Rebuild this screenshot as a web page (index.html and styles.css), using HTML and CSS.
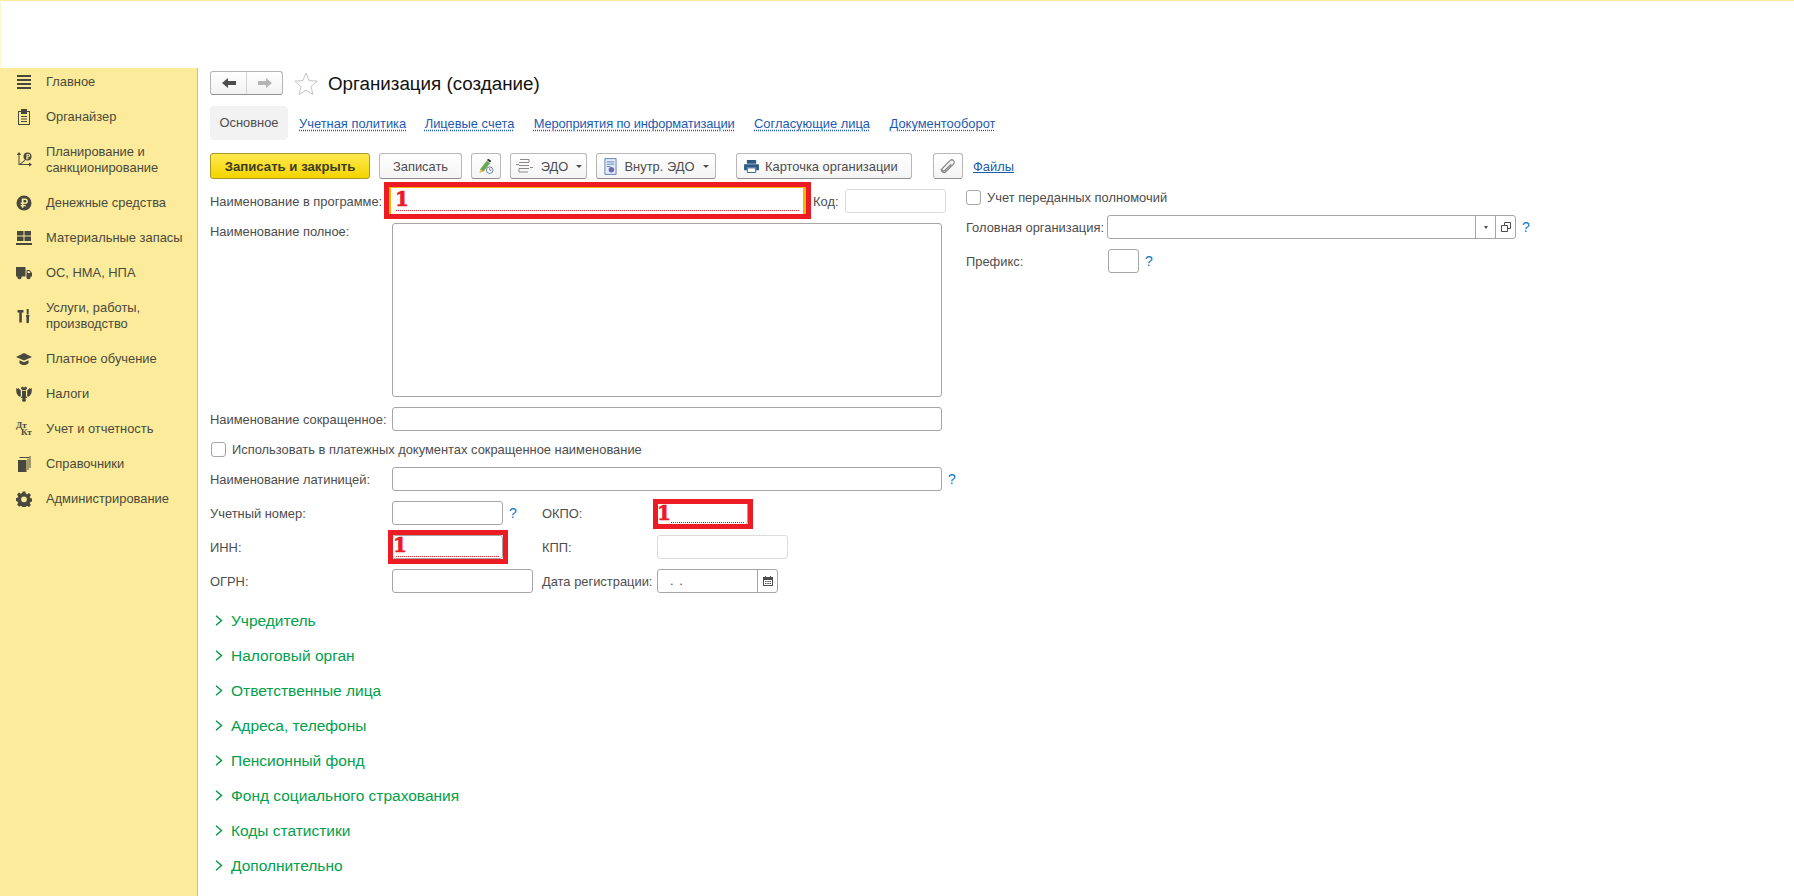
FILE: index.html
```html
<!DOCTYPE html>
<html lang="ru">
<head>
<meta charset="utf-8">
<title>Организация (создание)</title>
<link rel="stylesheet" href="styles.css">
</head>
<body>
<header class="topbar"></header>
<div class="shell">
  <nav class="sidebar">
    <a class="nav-item"><svg class="nav-icon" viewBox="0 0 16 16"><path d="M1 1h14v2H1zM1 5h14v2H1zM1 9h14v2H1zM1 13h14v2H1z"/></svg><span>Главное</span></a>
    <a class="nav-item"><svg class="nav-icon" viewBox="0 0 16 16"><path fill-rule="evenodd" d="M2 2h3V0h6v2h3v14H2zM3 3v12h10V3h-2v2H5V3z"/><path d="M5 7h6v1H5zM5 9.500h6v1H5zM5 12h6v1H5z"/></svg><span>Органайзер</span></a>
    <a class="nav-item"><svg class="nav-icon" viewBox="0 0 16 16"><path d="M2.500 2v11h12v-1h-11V2z"/><path d="M3 0 .8 3h4.400zM16 12.500l-3-2v4zM3.500 12l5-4 .6.700-5 4z"/><circle cx="11.500" cy="4.500" r="4"/><path fill="#fbeb9b" d="M10.500 2h2.200a1.500 1.500 0 0 1 0 3h-1.200v.8h1.500v.8h-1.500V7.500h-1V6.600H10v-.8h.5zM11.500 3v1.200h1.100a.6.600 0 0 0 0-1.200z"/></svg><span>Планирование и<br>санкционирование</span></a>
    <a class="nav-item"><svg class="nav-icon" viewBox="0 0 16 16"><circle cx="8" cy="8" r="7.500"/><path fill="#fbeb9b" d="M5.800 3.500h3.400a2.700 2.700 0 0 1 0 5.400H7.500v1h2.300v1.300H7.500v1.600H5.800v-1.600H4.700v-1.300h1.100v-1H4.700V7.600h1.100zM7.500 5v2.600h1.600a1.300 1.300 0 0 0 0-2.600z"/></svg><span>Денежные средства</span></a>
    <a class="nav-item"><svg class="nav-icon" viewBox="0 0 16 16"><path d="M1 1h6.500v4.500H1zM8.500 1H15v4.500H8.500zM1 6.500h6.500V11H1zM8.500 6.500H15V11H8.500zM0 13h16v2H0z"/></svg><span>Материальные запасы</span></a>
    <a class="nav-item"><svg class="nav-icon" viewBox="0 0 16 16"><path d="M0 2h9.500v9.500H0zM10.500 5h3l2.500 3v3.500h-5.500z"/><circle cx="3.500" cy="12" r="2.200"/><circle cx="12.500" cy="12" r="2.200"/><path fill="#fbeb9b" d="M11.500 6h1.600l1.500 2h-3.100z"/></svg><span>ОС, НМА, НПА</span></a>
    <a class="nav-item"><svg class="nav-icon" viewBox="0 0 16 16"><path d="M1.500 2H7.500V4.500H5.800V14.500H3.300V4.500H1.500zM10.700 1h2v5.500h-2zM10 7h3.400v1.200l-.4 1V14a1.300 1.300 0 0 1-2.600 0V9.200l-.4-1z"/></svg><span>Услуги, работы,<br>производство</span></a>
    <a class="nav-item"><svg class="nav-icon" viewBox="0 0 16 16"><path d="M8 2 0 6l8 3.500L16 6zM3.500 9.200v3c2 2.400 7 2.400 9 0v-3L8 11.200z"/></svg><span>Платное обучение</span></a>
    <a class="nav-item"><svg class="nav-icon" viewBox="0 0 16 16"><path d="M5.500 1 7 .5 8 2l1-1.500 1.500.5.500 1.500L9.800 4h-3.600L5 2.500zM0 2l1.500 1 1 -1 1 1.200 1.300 1.300V10L4 11l-2-1.500L.5 7zM16 2l-1.500 1-1-1-1 1.200-1.300 1.300V10l.8 1 2-1.500L15.500 7zM6 4.800h4V10l1 1.500-1.500 1 .5 2.500-2 1-2-1 .5-2.500-1.500-1L6 10z"/></svg><span>Налоги</span></a>
    <a class="nav-item"><span class="debit-icon"><b>Дт</b><b>Кт</b></span><span>Учет и отчетность</span></a>
    <a class="nav-item"><svg class="nav-icon" viewBox="0 0 16 16"><path d="M2 4h8.500v12H2zM11.500 2.500h1V14h-1zM3.500 1h9.500v1H3.500zM13.500 0h1v12h-1z"/></svg><span>Справочники</span></a>
    <a class="nav-item"><svg class="nav-icon" viewBox="0 0 16 16"><path fill-rule="evenodd" d="M6.600.5h2.800l.4 2.100 1.300.6 1.900-1.100 1.900 2-1.100 1.800.6 1.400 2 .4v2.700l-2 .5-.6 1.300 1.100 1.900-1.900 1.900-1.900-1.100-1.300.6-.4 2H6.600l-.4-2-1.300-.6L3 15.500l-1.900-1.900 1.100-1.900-.6-1.300-2-.5V7.200l2-.4.6-1.400L1.100 3.600l1.900-2 1.900 1.100 1.300-.6zM8 5.400a2.900 2.900 0 1 0 0 5.800 2.900 2.900 0 0 0 0-5.800z"/></svg><span>Администрирование</span></a>
  </nav>
  <main class="content">
    <div class="title-row">
      <div class="history">
        <button class="hist-btn"><svg viewBox="0 0 14 10" width="14" height="10"><path fill="#4d4d4d" d="M0 5l6-5v3h8v4H6v3z"/></svg></button>
        <button class="hist-btn"><svg viewBox="0 0 14 10" width="14" height="10"><path fill="#b5b5b5" d="M14 5L8 0v3H0v4h8v3z"/></svg></button>
      </div>
      <svg class="star" viewBox="0 0 24 23"><path fill="#fff" stroke="#c4c4c4" d="M12 1l3.100 7.600 8.200.6-6.300 5.300 2 8-7-4.300-7 4.300 2-8L.7 9.200l8.200-.6z"/></svg>
      <h1 class="title">Организация (создание)</h1>
    </div>
    <div class="tabs">
      <span class="tab-active">Основное</span>
      <a class="tab-link">Учетная политика</a>
      <a class="tab-link">Лицевые счета</a>
      <a class="tab-link tab-long">Мероприятия по информатизации</a>
      <a class="tab-link">Согласующие лица</a>
      <a class="tab-link">Документооборот</a>
    </div>
    <div class="toolbar">
      <button class="btn btn-primary">Записать и закрыть</button>
      <button class="btn btn-save">Записать</button>
      <button class="btn btn-icon"><svg viewBox="0 0 22 20" width="18" height="17"><path fill="#6aa84f" d="M4 13 12 3l4 3-8 10-4 1z"/><path fill="#333" d="M12 2l2-1.500 3.500 2.700-1.500 2z"/><path fill="#e8c060" d="M4 13l4 3-5 2z"/><circle cx="15.500" cy="14.500" r="4" fill="#fff" stroke="#4a6a8a"/><path stroke="#4a6a8a" fill="none" d="M15.500 12v2.500h2"/></svg></button>
      <button class="btn btn-edo"><svg viewBox="0 0 18 16" width="18" height="16"><path fill="none" stroke="#8a8a8a" d="M5 1.500h9v3M4 4.500h10M4 7.500h10M4 10.500h10M4 10.500v3.500h9M1 6.500h3M15 9.500h3"/></svg><span>ЭДО</span><i class="caret"></i></button>
      <button class="btn btn-inner"><svg viewBox="0 0 14 18" width="13" height="17"><path fill="#e4ecf7" stroke="#5b7fb5" d="M1 .5h12v17H1z"/><path stroke="#5b7fb5" d="M3 4h8M3 6.500h8M3 9h4"/><circle cx="8" cy="12.500" r="3" fill="#6a6ab5"/></svg><span>Внутр. ЭДО</span><i class="caret"></i></button>
      <button class="btn btn-card"><svg viewBox="0 0 16 14" width="15" height="13"><path fill="#2c5a85" d="M3 0h10v4H3zM0 4.500h16V11h-3V8H3v3H0z"/><path fill="#fff" stroke="#2c5a85" d="M3.500 8.500h9v5h-9z"/></svg><span>Карточка организации</span></button>
      <button class="btn btn-clip"><svg viewBox="0 0 16 16" width="16" height="16"><path fill="none" stroke="#8a8a8a" stroke-width="1.300" d="M5 14.500 13.500 6a2.400 2.400 0 0 0-3.400-3.400L2.500 10.200a1.600 1.600 0 0 0 2.300 2.300L11 6.200M5 14.500a3.300 3.300 0 0 1-3.800-3.500"/></svg></button>
      <a class="files-link">Файлы</a>
    </div>
    <div class="form">
      <div class="col-left">
        <div class="row">
          <label class="lbl">Наименование в программе:</label>
          <div class="field f-name"><div class="note note-name"><span class="note-digit">1</span><i class="note-dots"></i></div></div>
          <label class="lbl-code">Код:</label>
          <div class="field f-code soft"></div>
        </div>
        <div class="row">
          <label class="lbl lbl-top">Наименование полное:</label>
          <div class="field f-full"></div>
        </div>
        <div class="row">
          <label class="lbl">Наименование сокращенное:</label>
          <div class="field f-wide"></div>
        </div>
        <div class="row row-check">
          <i class="check"></i><label class="check-lbl">Использовать в платежных документах сокращенное наименование</label>
        </div>
        <div class="row">
          <label class="lbl">Наименование латиницей:</label>
          <div class="field f-wide"></div><span class="help">?</span>
        </div>
        <div class="row">
          <label class="lbl">Учетный номер:</label>
          <div class="cell"><div class="field f-num"></div><span class="help">?</span></div>
          <label class="lbl2">ОКПО:</label>
          <div class="field f-okpo"><div class="note note-okpo"><span class="note-digit">1</span><i class="note-dots"></i></div></div>
        </div>
        <div class="row">
          <label class="lbl">ИНН:</label>
          <div class="cell"><div class="field f-num"><div class="note note-inn"><span class="note-digit">1</span><i class="note-dots"></i></div></div></div>
          <label class="lbl2">КПП:</label>
          <div class="field f-kpp soft"></div>
        </div>
        <div class="row">
          <label class="lbl">ОГРН:</label>
          <div class="cell"><div class="field f-ogrn"></div></div>
          <label class="lbl2">Дата регистрации:</label>
          <div class="field f-date"><span class="date-mask">. .</span><span class="field-btn"><svg viewBox="0 0 10 10" width="10" height="10"><path fill="#4d4d4d" fill-rule="evenodd" d="M0 1h2V0h1v1h4V0h1v1h2v9H0zM1 4v5h8V4z"/><path fill="#4d4d4d" d="M2 5h1.500v1H2zM4.300 5h1.500v1H4.300zM6.500 5H8v1H6.500zM2 7h1.500v1H2zM4.300 7h1.500v1H4.300zM6.500 7H8v1H6.500z"/></svg></span></div>
        </div>
        <div class="groups">
          <div class="group"><svg class="chev" viewBox="0 0 8 11"><path d="M1 .7 6.500 5.500 1 10.300"/></svg>Учредитель</div>
          <div class="group"><svg class="chev" viewBox="0 0 8 11"><path d="M1 .7 6.500 5.500 1 10.300"/></svg>Налоговый орган</div>
          <div class="group"><svg class="chev" viewBox="0 0 8 11"><path d="M1 .7 6.500 5.500 1 10.300"/></svg>Ответственные лица</div>
          <div class="group"><svg class="chev" viewBox="0 0 8 11"><path d="M1 .7 6.500 5.500 1 10.300"/></svg>Адреса, телефоны</div>
          <div class="group"><svg class="chev" viewBox="0 0 8 11"><path d="M1 .7 6.500 5.500 1 10.300"/></svg>Пенсионный фонд</div>
          <div class="group"><svg class="chev" viewBox="0 0 8 11"><path d="M1 .7 6.500 5.500 1 10.300"/></svg>Фонд социального страхования</div>
          <div class="group"><svg class="chev" viewBox="0 0 8 11"><path d="M1 .7 6.500 5.500 1 10.300"/></svg>Коды статистики</div>
          <div class="group"><svg class="chev" viewBox="0 0 8 11"><path d="M1 .7 6.500 5.500 1 10.300"/></svg>Дополнительно</div>
        </div>
      </div>
      <div class="col-right">
        <div class="row row-check-right">
          <i class="check"></i><label class="check-lbl">Учет переданных полномочий</label>
        </div>
        <div class="row">
          <label class="lbl-right">Головная организация:</label>
          <div class="field f-head"><span class="field-btn"><i class="caret caret-small"></i></span><span class="field-btn"><svg viewBox="0 0 10 10" width="10" height="10"><path fill="none" stroke="#4d4d4d" d="M3.500 3.500V.5h6v6h-3M.5 3.500h6v6h-6z"/></svg></span></div>
          <span class="help">?</span>
        </div>
        <div class="row">
          <label class="lbl-right lbl-prefix">Префикс:</label>
          <div class="field f-prefix"></div>
          <span class="help">?</span>
        </div>
      </div>
    </div>
  </main>
</div>
</body>
</html>
```
FILE: styles.css
```css
* { box-sizing: border-box; }
html, body { margin: 0; height: 100%; }
body {
  width: 1794px;
  height: 896px;
  overflow: hidden;
  background: #fff;
  font-family: "Liberation Sans", Arial, sans-serif;
  font-size: 12.900px;
  color: #4d4d4d;
  display: flex;
  flex-direction: column;
}
.topbar {
  height: 68px;
  flex: none;
  background: #fff;
  border-top: 1px solid #fbeb9b;
  border-left: 1px solid #fdf5cd;
}
.shell { flex: 1; display: flex; min-height: 0; }

.sidebar {
  width: 198px;
  flex: none;
  background: #fbeb9b;
  border-right: 1px solid #cfc079;
  padding: 6px 0 0 16px;
  display: flex;
  flex-direction: column;
  gap: 19px;
}
.nav-item {
  display: flex;
  align-items: center;
  gap: 14px;
  line-height: 16px;
  color: #4a4a3c;
}
.nav-icon { width: 16px; height: 16px; flex: none; fill: #48483e; }
.debit-icon {
  width: 16px;
  flex: none;
  display: flex;
  flex-direction: column;
  font-family: "Liberation Serif", serif;
  font-size: 9px;
  line-height: 7px;
  color: #48483e;
}
.debit-icon b:last-child { margin-left: 5px; }

.content { flex: 1; padding: 3px 0 0 12px; min-width: 0; }
.title-row { display: flex; align-items: center; height: 24px; }
.history {
  display: flex;
  width: 73px;
  height: 24px;
  border: 1px solid #b5b5b5;
  border-bottom-color: #8f8f8f;
  border-radius: 3px;
  background: linear-gradient(#fff, #f2f2f2);
}
.hist-btn {
  flex: 1;
  border: 0;
  padding: 0;
  background: none;
  display: flex;
  align-items: center;
  justify-content: center;
}
.hist-btn + .hist-btn { border-left: 1px solid #d4d4d4; }
.star { width: 24px; height: 23px; margin-left: 11px; }
.title {
  margin: 2px 0 0 10px;
  font-size: 18.800px;
  font-weight: 400;
  color: #111;
}
.tabs { display: flex; align-items: center; margin-top: 11px; height: 34px; }
.tab-active {
  width: 78px;
  height: 34px;
  line-height: 34px;
  text-align: center;
  background: #f2f2f2;
  border-radius: 4px;
  margin-right: 11px;
}
.tab-link {
  color: #1c5bb0;
  text-decoration: underline dotted;
  text-underline-offset: 2px;
  margin-right: 19.500px;
}
.tab-link:nth-child(2) { margin-right: 18.500px; }
.tab-long { letter-spacing: -.150px; }
.toolbar { display: flex; align-items: center; margin-top: 13px; height: 26px; gap: 9px; }
.btn {
  height: 26px;
  padding: 0;
  font: inherit;
  color: #4d4d4d;
  display: flex;
  align-items: center;
  justify-content: center;
  gap: 8px;
  background: linear-gradient(#fff, #f4f4f4);
  border: 1px solid #b8b8b8;
  border-bottom-color: #8f8f8f;
  border-radius: 3px;
}
.btn-primary {
  width: 160px;
  font-size: 13.200px;
  font-weight: 700;
  color: #3c3c20;
  background: linear-gradient(#ffe94f, #f5d400);
  border-color: #a9982a;
}
.btn-save { width: 83px; }
.btn-icon { width: 30px; }
.btn-edo { width: 77px; }
.btn-inner { width: 120px; }
.btn-card { width: 176px; margin-left: 11px; justify-content: flex-start; padding-left: 7px; gap: 6px; }
.btn-clip { width: 30px; margin-left: 12px; }
.files-link { color: #1c5bb0; text-decoration: underline; margin-left: 1px; }
.caret {
  width: 0;
  height: 0;
  border: 3px solid transparent;
  border-top: 3px solid #4d4d4d;
  border-bottom: 0;
  display: inline-block;
}
.caret-small { border-width: 3px 2.500px 0; }

.form { display: flex; padding-top: 10px; }
.col-left { width: 756px; flex: none; display: flex; flex-direction: column; gap: 10px; }
.col-right { flex: 1; display: flex; flex-direction: column; gap: 10px; }
.row { display: flex; align-items: center; min-height: 24px; position: relative; }
.lbl { width: 182px; flex: none; }
.lbl-top { align-self: flex-start; padding-top: 1px; }
.lbl-code { padding-left: 10px; width: 42px; flex: none; }
.lbl2 { width: 115px; flex: none; }
.lbl-right { width: 141px; flex: none; }
.lbl-prefix { width: 142px; }
.cell { width: 150px; flex: none; display: flex; align-items: center; }
.field {
  height: 24px;
  background: #fff;
  border: 1px solid #a6a6a6;
  border-radius: 3px;
  position: relative;
  display: flex;
  flex: none;
}
.field.soft { border-color: #dcdcdc; }
.f-name { width: 411px; border-color: transparent; }
.f-code { width: 101px; }
.f-full { width: 550px; height: 174px; }
.f-wide { width: 550px; }
.f-num { width: 111px; }
.f-okpo { width: 91px; }
.f-kpp { width: 131px; }
.f-ogrn { width: 141px; }
.f-date { width: 121px; justify-content: space-between; }
.f-head { width: 409px; justify-content: flex-end; }
.f-prefix { width: 31px; }
.field-btn {
  width: 20px;
  flex: none;
  border-left: 1px solid #a6a6a6;
  display: flex;
  align-items: center;
  justify-content: center;
}
.date-mask { padding-left: 12px; line-height: 22px; word-spacing: 2px; }
.help { color: #0b76c4; font-size: 14px; margin-left: 6px; }
.row-check { min-height: 16px; padding-left: 1px; }
.row-check-right { min-height: 16px; }
.check {
  width: 15px;
  height: 15px;
  flex: none;
  background: #fff;
  border: 1px solid #a6a6a6;
  border-radius: 3px;
}
.check-lbl { margin-left: 6px; }

.note {
  position: absolute;
  border: 5px solid #ed1c24;
  pointer-events: none;
}
.note-name {
  top: -8px; bottom: -7px; left: -9px; right: -9px;
  box-shadow: inset 2px 1px 0 #f5b800, inset -3px 0 0 #f5b800;
}
.note-okpo { top: -3px; bottom: -5px; left: -5px; right: -6px; }
.note-inn { top: -6px; bottom: -6px; left: -5px; right: -6px; }
.note-digit {
  position: absolute;
  left: 6px;
  top: 0;
  font-family: "DejaVu Serif", serif;
  font-weight: 700;
  font-size: 20px;
  line-height: 24px;
  color: #ed1c24;
  -webkit-text-stroke: .6px #ed1c24;
}
.note-okpo .note-digit { left: -1px; top: -3px; }
.note-inn .note-digit { left: 0; top: -2px; }
.note-dots {
  position: absolute;
  left: 7px;
  right: 7px;
  bottom: 3px;
  border-bottom: 1px dotted #ed1c24;
}
.note-okpo .note-dots { left: 13px; right: 4px; bottom: 1px; }
.note-inn .note-dots { left: 3px; right: 4px; bottom: 2px; }

.groups { display: flex; flex-direction: column; }
.group {
  height: 35px;
  display: flex;
  align-items: center;
  font-size: 15.500px;
  color: #00a04a;
  padding-left: 5px;
}
.chev {
  width: 8px;
  height: 11px;
  margin-right: 8px;
  flex: none;
  fill: none;
  stroke: #0a9a4c;
  stroke-width: 1.500;
}
```
